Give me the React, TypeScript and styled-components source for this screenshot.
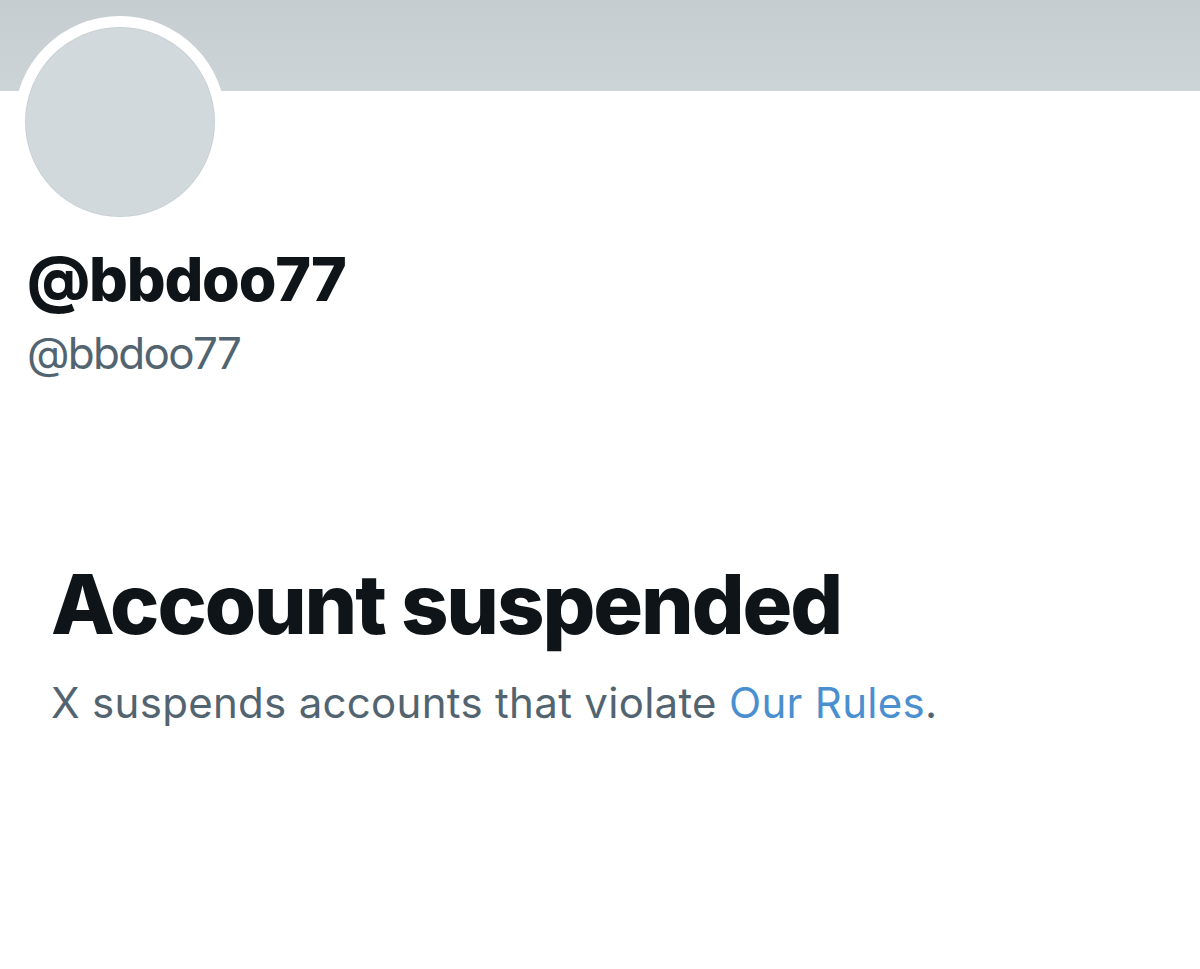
import React from "react";
import styled, { createGlobalStyle } from "styled-components";

const Global = createGlobalStyle`
  html, body { margin: 0; padding: 0; background: #ffffff; }
  body { font-family: Inter, "Noto Sans", sans-serif; -webkit-font-smoothing: antialiased; }
`;

const Page = styled.div`
  width: 1200px;
  height: 969px;
  background: #ffffff;
  overflow: hidden;
`;

const Banner = styled.div`
  height: 91px;
  background: linear-gradient(180deg, #c6cdd1 0%, #cdd4d8 100%);
`;

const Header = styled.div`
  padding: 0 0 0 14px;
  margin-top: -75px;
`;

const AvatarRing = styled.div`
  width: 212px;
  height: 212px;
  border-radius: 50%;
  background: #ffffff;
  display: flex;
  align-items: center;
  justify-content: center;
`;

const Avatar = styled.div`
  width: 190px;
  height: 190px;
  border-radius: 50%;
  background: #d1d9dd;
  box-shadow: inset 0 0 0 1px rgba(0, 0, 0, 0.04);
`;

const Names = styled.div`
  display: flex;
  flex-direction: column;
  padding-left: 27px;
  margin-top: 15px;
`;

const DisplayName = styled.div`
  font-size: 61px;
  font-weight: 800;
  color: #0f1419;
  line-height: 72px;
  letter-spacing: -1.2px;
`;

const Handle = styled.div`
  margin-top: 11px;
  font-size: 44px;
  font-weight: 400;
  color: #536471;
  line-height: 54px;
  letter-spacing: -1.7px;
`;

const Notice = styled.div`
  padding-left: 51px;
  margin-top: 176px;
  display: flex;
  flex-direction: column;
`;

const Title = styled.h1`
  margin: 0;
  font-size: 83px;
  font-weight: 800;
  color: #0f1419;
  line-height: 96px;
  letter-spacing: -2.1px;
`;

const Body = styled.p`
  margin: 24px 0 0;
  font-size: 42px;
  font-weight: 400;
  color: #536471;
  line-height: 54px;
  letter-spacing: 0.3px;
`;

const Link = styled.a`
  color: #4a8fcf;
  text-decoration: none;
`;

export default function App() {
  return (
    <Page>
      <Global />
      <Banner />
      <Header>
        <AvatarRing>
          <Avatar />
        </AvatarRing>
      </Header>
      <Names>
        <DisplayName>@bbdoo77</DisplayName>
        <Handle>@bbdoo77</Handle>
      </Names>
      <Notice>
        <Title>Account suspended</Title>
        <Body>
          X suspends accounts that violate <Link href="#">Our Rules</Link>.
        </Body>
      </Notice>
    </Page>
  );
}
